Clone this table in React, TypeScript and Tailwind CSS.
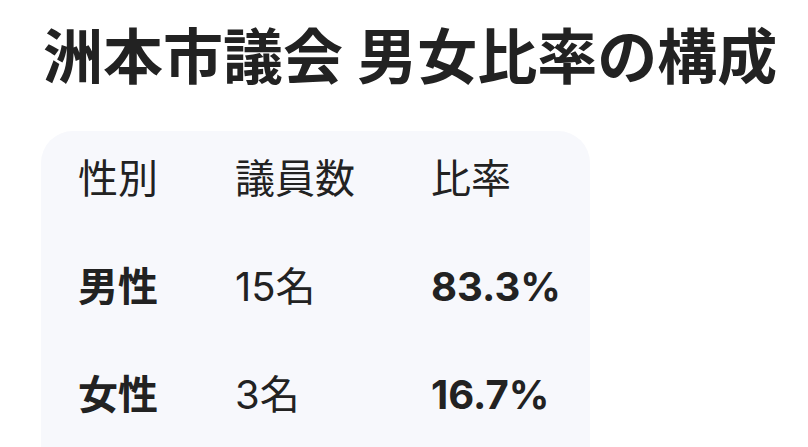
import React from "react";

const rows = [
  { label: "男性", count: "15名", rate: "83.3%" },
  { label: "女性", count: "3名", rate: "16.7%" },
];

export default function App() {
  return (
    <div
      className="w-[808px] h-[447px] overflow-hidden bg-white text-[#222222]"
      style={{ fontFamily: 'Inter, "Noto Sans CJK JP", sans-serif' }}
    >
      <div className="pl-[41px] pt-[20px]">
        <h1 className="text-[60px] font-bold leading-[75px] pl-[2px] whitespace-nowrap">
          洲本市議会 男女比率の構成
        </h1>
        <div className="mt-[36px] w-[549px] h-[400px] rounded-[32px] bg-[#f7f8fc] pt-[20px] pl-[37px]">
          <div className="grid grid-cols-[157px_196px_1fr] gap-y-[52px] text-[40px] leading-[56px]">
            <div className="font-normal">性別</div>
            <div className="font-normal">議員数</div>
            <div className="font-normal">比率</div>
            {rows.map((r) => (
              <React.Fragment key={r.label}>
                <div className="font-bold">{r.label}</div>
                <div className="font-normal">{r.count}</div>
                <div className="font-bold">{r.rate}</div>
              </React.Fragment>
            ))}
          </div>
        </div>
      </div>
    </div>
  );
}
